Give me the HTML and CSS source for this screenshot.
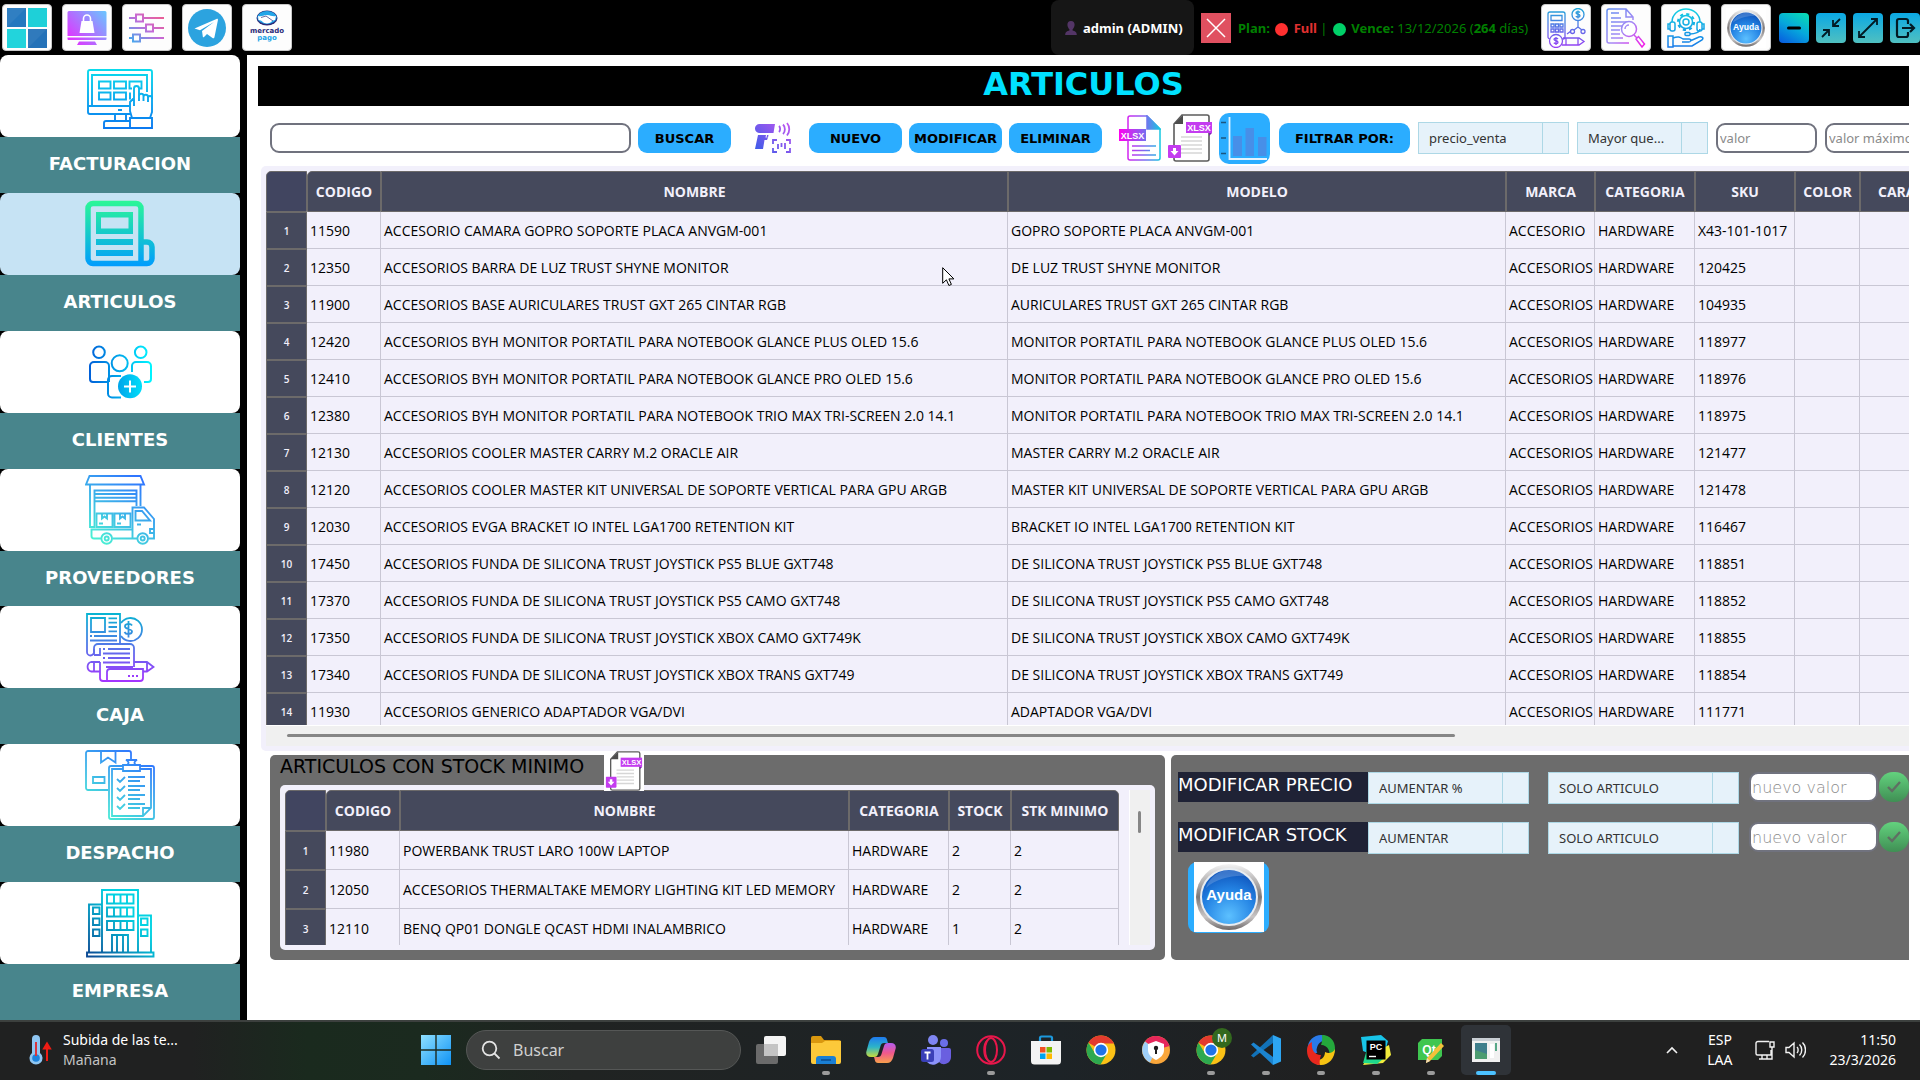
FILE: index.html
```html
<!DOCTYPE html>
<html lang="es">
<head>
  <meta charset="UTF-8" />
  <meta name="viewport" content="width=device-width, initial-scale=1.0" />
  <title>Articulos</title>
  <link rel="stylesheet" href="styles.css">
</head>
<body>
  <!-- degradados y simbolos compartidos -->
  <svg class="defs" aria-hidden="true">
    <defs>
      <linearGradient id="g-cyan" gradientUnits="userSpaceOnUse" x1="0" y1="8" x2="0" y2="68"><stop offset="0" stop-color="#0bdcec"/><stop offset="1" stop-color="#0b78f0"/></linearGradient>
      <linearGradient id="g-green" gradientUnits="userSpaceOnUse" x1="0" y1="2" x2="0" y2="68"><stop offset="0" stop-color="#2bf797"/><stop offset="1" stop-color="#009bff"/></linearGradient>
      <linearGradient id="g-people" gradientUnits="userSpaceOnUse" x1="4" y1="0" x2="66" y2="0"><stop offset="0" stop-color="#005fd8"/><stop offset="1" stop-color="#00f4ff"/></linearGradient>
      <linearGradient id="g-truck" gradientUnits="userSpaceOnUse" x1="10" y1="68" x2="52" y2="2"><stop offset="0" stop-color="#4bf5d2"/><stop offset="1" stop-color="#2f74ff"/></linearGradient>
      <linearGradient id="g-caja" gradientUnits="userSpaceOnUse" x1="0" y1="1" x2="0" y2="68"><stop offset="0" stop-color="#06b6d2"/><stop offset="1" stop-color="#a335ff"/></linearGradient>
      <linearGradient id="g-build" gradientUnits="userSpaceOnUse" x1="4" y1="68" x2="46" y2="26"><stop offset="0" stop-color="#0c4a94"/><stop offset="1" stop-color="#02d2e2"/></linearGradient>
      <linearGradient id="g-pink" gradientUnits="userSpaceOnUse" x1="0" y1="34" x2="38" y2="0"><stop offset="0" stop-color="#ee22ff"/><stop offset="1" stop-color="#6cc4ff"/></linearGradient>
      <linearGradient id="g-slider" gradientUnits="userSpaceOnUse" x1="0" y1="30" x2="26" y2="0"><stop offset="0" stop-color="#36b0f0"/><stop offset=".6" stop-color="#c46ad8"/><stop offset="1" stop-color="#e8609a"/></linearGradient>
      <linearGradient id="g-calc" gradientUnits="userSpaceOnUse" x1="0" y1="0" x2="0" y2="40"><stop offset="0" stop-color="#1ca7d8"/><stop offset="1" stop-color="#9a3cf5"/></linearGradient>
      <linearGradient id="g-report" gradientUnits="userSpaceOnUse" x1="0" y1="0" x2="36" y2="38"><stop offset="0" stop-color="#5a8cf0"/><stop offset=".55" stop-color="#a58af5"/><stop offset="1" stop-color="#f020e8"/></linearGradient>
      <linearGradient id="g-support" gradientUnits="userSpaceOnUse" x1="0" y1="0" x2="0" y2="40"><stop offset="0" stop-color="#12d3e2"/><stop offset="1" stop-color="#1878e8"/></linearGradient>
      <linearGradient id="g-scan" gradientUnits="userSpaceOnUse" x1="4" y1="32" x2="34" y2="0"><stop offset="0" stop-color="#3a5ce8"/><stop offset="1" stop-color="#c356f2"/></linearGradient>
      <linearGradient id="g-xlsx" gradientUnits="userSpaceOnUse" x1="0" y1="20" x2="42" y2="20"><stop offset="0" stop-color="#ff00f0"/><stop offset=".6" stop-color="#8068f0"/><stop offset="1" stop-color="#10cbe0"/></linearGradient>
      <linearGradient id="g-ring" x1="0" y1="0" x2="0" y2="1"><stop offset="0" stop-color="#f4f4f4"/><stop offset=".5" stop-color="#7d7878"/><stop offset=".8" stop-color="#c9c6c6"/><stop offset="1" stop-color="#6d6868"/></linearGradient>
      <radialGradient id="g-ball" cx=".5" cy=".85" r=".8"><stop offset="0" stop-color="#5cc0ff"/><stop offset=".6" stop-color="#2484e4"/><stop offset="1" stop-color="#1159c0"/></radialGradient>
      <linearGradient id="g-win" x1="0" y1="0" x2="1" y2="1"><stop offset="0" stop-color="#8fe0ff"/><stop offset="1" stop-color="#0f93f5"/></linearGradient>
      <linearGradient id="g-cop1" x1="0" y1="0" x2="0" y2="1"><stop offset="0" stop-color="#1f7bf0"/><stop offset=".5" stop-color="#2cb4c8"/><stop offset="1" stop-color="#c8dc3c"/></linearGradient>
      <linearGradient id="g-cop2" x1="0" y1="0" x2="0" y2="1"><stop offset="0" stop-color="#b45cf0"/><stop offset=".5" stop-color="#f0588c"/><stop offset="1" stop-color="#f8a04c"/></linearGradient>
    </defs>
    <symbol id="ayuda" viewBox="0 0 70 70">
      <rect width="70" height="70" fill="#fff"/>
      <circle cx="35" cy="35" r="33" fill="url(#g-ring)"/>
      <circle cx="35" cy="35" r="29" fill="#e8edf2"/>
      <circle cx="35" cy="35" r="27" fill="url(#g-ball)"/>
      <path d="M12 26a25 25 0 0 1 40-12c-14-1-30 3-40 12z" fill="#fff" opacity=".18"/>
    </symbol>
    <symbol id="xlsx-down" viewBox="0 0 44 48">
      <rect width="44" height="48" fill="#fff"/>
      <path d="M14 1h25a2 2 0 0 1 2 2v42a2 2 0 0 1-2 2H8a2 2 0 0 1-2-2V10z" fill="#fff" stroke="#5c5c5c" stroke-width="1.6"/>
      <path d="M15 1v9H6z" fill="#4d4d4d"/>
      <path d="M13 23h21M13 27h21M13 31h21M13 35h21M13 39h21" stroke="#d6d6d6" stroke-width="1.6"/>
      <path d="M41 19h3l-3 3z" fill="#8022b0"/>
      <rect x="18" y="8" width="26" height="11" fill="#c43cf0"/>
      <rect x="0" y="31" width="13" height="13" rx="1" fill="#c43cf0"/>
      <path d="M5 34h3v3h2.500L6.500 41.500 2.500 37H5z" fill="#fff"/>
    </symbol>
    <symbol id="chrome" viewBox="0 0 30 30">
      <circle cx="15" cy="15" r="14.500" fill="#fbc116"/>
      <path d="M15 15 2.440 7.750A14.500 14.500 0 0 1 27.560 7.750L28 8.500H15z" fill="#e33b2e"/>
      <path d="M2.440 7.750A14.500 14.500 0 0 0 14.500 29.500L21 18.500 9.500 19z" fill="#2da94f"/>
      <circle cx="15" cy="15" r="7.200" fill="#fff"/>
      <circle cx="15" cy="15" r="5.600" fill="#1f73e8"/>
    </symbol>
  </svg>

  <header class="topbar">
    <nav class="top-group">
      <button class="top-btn" aria-label="Inicio">
        <svg width="40" height="40" viewBox="0 0 40 40"><path d="M0 0h19v19H0z" fill="#2478bf"/><path d="M21 0h19v19H21z" fill="#1ed0d8"/><path d="M0 21h19v19H0z" fill="#22d4dc"/><path d="M21 21h19v19H21z" fill="#2472b8"/><path d="M0 0h19L0 19zM21 21h19L21 40z" fill="#fff" opacity=".06"/></svg>
      </button>
      <button class="top-btn" aria-label="Tienda">
        <svg width="40" height="34" viewBox="0 0 40 34"><path d="M2 0h36a1.500 1.500 0 0 1 1.500 1.500V25H.5V1.500A1.500 1.500 0 0 1 2 0zM.5 26.500h39V28a1 1 0 0 1-1 1h-37a1 1 0 0 1-1-1zM12 30.500h16l2 3.500H10z" fill="url(#g-pink)"/><path d="M14.500 10h11l2 12h-15z" fill="#fff"/><path d="M16.500 13V7.500a3.500 3.500 0 0 1 7 0V13" fill="none" stroke="#fff" stroke-width="1.600"/></svg>
      </button>
      <button class="top-btn" aria-label="Configuracion">
        <svg width="36" height="30" viewBox="0 0 36 30" fill="none" stroke="url(#g-slider)" stroke-width="2"><path d="M0 5h7M14 5h21M0 15h17M24 15h11M0 25h4M11 25h24"/><path d="M7 1.500h7v7H7zM17 11.500h7v7h-7zM4 21.500h7v7H4z"/></svg>
      </button>
      <button class="top-btn" aria-label="Telegram">
        <svg width="38" height="38" viewBox="0 0 38 38"><circle cx="19" cy="19" r="19" fill="#2ca3df"/><path d="M6.500 19.500 28.500 10c1-.4 1.600 0 1.400 1.200L26.500 28c-.3 1.300-1 1.500-2 1l-5.500-4-3 3c-.6.5-1.200.3-1.200-.6L14 22l12-9-14 8.200-5.500-1.700z" fill="#fff"/></svg>
      </button>
      <button class="top-btn" aria-label="Mercado Pago">
        <svg width="44" height="36" viewBox="0 0 44 36"><ellipse cx="22" cy="8" rx="10.500" ry="7.500" fill="#2a2a78"/><ellipse cx="22" cy="7.500" rx="9.700" ry="6.500" fill="#22a5e8"/><path d="M13 6c4 1 5-1 9-1s5 2 9 1l-1 4c-3 0-4 3.500-8 3.500S17 10 13.500 10z" fill="#fff"/><path d="M16 7.500 21 6l7 5" fill="none" stroke="#2a2a78" stroke-width=".7"/><text x="22" y="23" text-anchor="middle" class="mp-dark">mercado</text><text x="22" y="30" text-anchor="middle" class="mp-light">pago</text></svg>
      </button>
    </nav>

    <div class="user">
      <svg width="14" height="14" viewBox="0 0 14 14" fill="#533566"><path d="M7 0c2.500 0 3.600 1.700 3.600 3.800S9.200 7.800 8.600 8.300v1.200c2 .6 4.200 1.200 4.200 4.500H1.200c0-3.300 2.200-3.900 4.200-4.500V8.300C4.800 7.800 3.400 5.900 3.400 3.800S4.500 0 7 0z"/></svg>
      <span>admin (ADMIN)</span>
    </div>
    <button class="close-x" aria-label="Cerrar sesion"><svg width="20" height="20" viewBox="0 0 20 20"><path d="M1 1l18 18M19 1 1 19" stroke="#fff" stroke-width="1.500"/></svg></button>
    <div class="plan"><b>Plan:</b> <i class="dot red"></i> <b class="full">Full</b> | <i class="dot green"></i> <b>Vence:</b> 13/12/2026 (<b>264</b> días)</div>

    <nav class="top-group right">
      <button class="top-btn" aria-label="Calculadora">
        <svg width="40" height="40" viewBox="0 0 40 40" fill="none" stroke="url(#g-calc)" stroke-width="1.300"><rect x="2" y="4" width="17" height="27" rx="2"/><path d="M5 7.500h11v5H5z"/><path d="M5 16h3v3H5zM9.500 16h3v3h-3zM14 16h3v3h-3zM5 21h3v3H5zM9.500 21h3v3h-3zM14 21h3v3h-3z"/><circle cx="32" cy="6.500" r="6"/><path d="M34 4.500c-1-1.200-4-1-4 .5s4 1 4 2.700-3 1.800-4.200.5M32 2.500v8M32 12.500V19l-4 3M32 19l4 3M21 26l4-3"/><circle cx="26.500" cy="23.500" r="2"/><circle cx="37" cy="23.500" r="2"/><circle cx="10" cy="33" r="6.500" fill="#fff"/><path d="M12 31c-1-1.200-4-1-4 .5s4 1 4 2.700-3 1.800-4.200.5M10 29v8M17 30h16l5 3.500-5 3.500H16M20 30v7M32 30v7"/></svg>
      </button>
      <button class="top-btn" aria-label="Reportes">
        <svg width="40" height="40" viewBox="0 0 40 40" fill="none" stroke="url(#g-report)" stroke-width="1.500"><path d="M27 12V9l-7-8H3a2 2 0 0 0-2 2v30a2 2 0 0 0 2 2h20M20 1v8h7M5 5h8M5 10h10M5 14h17M5 18h11M5 22h9M5 26h9M5 30h12"/><circle cx="23" cy="21" r="7.500" fill="#fff"/><path d="M19 21a4 4 0 0 1 4-4M28 27l3 3M30 31l2.500-2.500 6 7.500-2.500 3z"/></svg>
      </button>
      <button class="top-btn" aria-label="Soporte">
        <svg width="38" height="40" viewBox="0 0 38 40" fill="none" stroke="url(#g-support)" stroke-width="1.500"><path d="M5 14a14 13 0 0 1 28 0M33 21c0 3-5 5-10 5"/><rect x="3" y="14" width="5" height="9" rx="2"/><rect x="30" y="14" width="5" height="9" rx="2"/><path d="M3 16H1v5h2M35 16h2v5h-2"/><circle cx="19" cy="14" r="3"/><circle cx="19" cy="14" r="6.500"/><circle cx="19" cy="14" r="8" stroke-dasharray="3.100 3.183" stroke-width="2.200"/><rect x="18" y="24.500" width="5" height="3" rx="1"/><path d="M1 28h5v11H1zM6 30c5-2 7-1 10 1h6c3 0 2 3 0 3h-7M23 33l9-4c3-1 5 1 3 3l-10 6H6"/></svg>
      </button>
      <button class="top-btn" aria-label="Ayuda"><svg width="40" height="40" viewBox="0 0 70 70"><use href="#ayuda"/><text x="35" y="38" text-anchor="middle" class="ayuda-text">Ayuda</text></svg></button>
    </nav>

    <div class="win-btns">
      <button class="win-btn min" aria-label="Minimizar"><svg width="16" height="16" viewBox="0 0 16 16"><rect x="1" y="6.500" width="14" height="3" rx="1.500" fill="#000"/></svg></button>
      <button class="win-btn" aria-label="Reducir"><svg width="22" height="22" viewBox="0 0 22 22" fill="none" stroke="#021a24" stroke-width="1.800"><path d="M20 2l-7 7M13 3v6h6M2 20l7-7M3 13h6v6"/></svg></button>
      <button class="win-btn" aria-label="Maximizar"><svg width="22" height="22" viewBox="0 0 22 22" fill="none" stroke="#021a24" stroke-width="1.800"><path d="M2 20 20 2M14 2h6v6M2 14v6h6"/></svg></button>
      <button class="win-btn" aria-label="Salir"><svg width="22" height="22" viewBox="0 0 22 22" fill="none" stroke="#021a24" stroke-width="2.200"><path d="M14 7V4a2 2 0 0 0-2-2H5a2 2 0 0 0-2 2v14a2 2 0 0 0 2 2h7a2 2 0 0 0 2-2v-3M8 11h12M16 7l4 4-4 4"/></svg></button>
    </div>
  </header>

  <div class="layout">
    <aside class="sidebar">
      <button class="side-item">
        <span class="side-icon"><svg width="70" height="70" viewBox="0 0 70 70" fill="none" stroke="url(#g-cyan)" stroke-width="1.900"><path d="M45 53H5a2 2 0 0 1-2-2V11a2 2 0 0 1 2-2h60a2 2 0 0 1 2 2v27"/><path d="M44 45H7V14h55v17M3 45h4"/><path d="M14 20.500h11.500v7H14zM29 20.500h12v7H29zM47 27.500h-2.500v-7h12v7H54M14 31.500h11.500v7H14zM29 31.500h12v7H29zM45 31.500v7M33 49h4M30 54v5.500M41 54v5.500M45 60H21a2 2 0 0 0-2 2v5h26"/><path d="M45 57h22v10H45zM47 57l-2-7V41l4-4v-9.500a2.500 2.500 0 0 1 5 0V40v-5a2.200 2.200 0 0 1 4.500 0v5-4a2.200 2.200 0 0 1 4.500 0v5-4a2 2 0 0 1 4 0v14l-2 6M49 37v8"/></svg></span>
        <span class="side-label">FACTURACION</span>
      </button>
      <button class="side-item active">
        <span class="side-icon"><svg width="70" height="70" viewBox="0 0 70 70"><path d="M8 4.500h43a5 5 0 0 1 5 5v55H8a5 5 0 0 1-5-5v-50a5 5 0 0 1 5-5zM56 64.500h6a5 5 0 0 0 5-5V48a5 5 0 0 0-5-5h-6" fill="none" stroke="url(#g-green)" stroke-width="5.500"/><path fill-rule="evenodd" d="M11 13h37v22H11zM16 18.500v11h27.500v-11zM11 40h37v6H11zM11 51h37v6H11z" fill="url(#g-green)"/></svg></span>
        <span class="side-label">ARTICULOS</span>
      </button>
      <button class="side-item">
        <span class="side-icon"><svg width="70" height="70" viewBox="0 0 70 70" fill="none" stroke="url(#g-people)" stroke-width="2"><circle cx="14" cy="15.300" r="5.800"/><circle cx="34.700" cy="26.300" r="8"/><circle cx="55.700" cy="15.300" r="5.800"/><path d="M22.500 45H8a3 3 0 0 1-3-3V29a4 4 0 0 1 4-4h11a4 4 0 0 1 4 4v9M47 35v-6a4 4 0 0 1 4-4h11a4 4 0 0 1 4 4v13a3 3 0 0 1-3 3h-4M36 60.500h-9a4 4 0 0 1-4-4V43a4 4 0 0 1 4-4h9M24 29v16"/><circle cx="45" cy="49.300" r="12" fill="url(#g-people)" stroke="none"/><path d="M45 43.500v12M39 49.500h12" stroke="#fff"/></svg></span>
        <span class="side-label">CLIENTES</span>
      </button>
      <button class="side-item">
        <span class="side-icon"><svg width="70" height="70" viewBox="0 0 70 70" fill="none" stroke="url(#g-truck)" stroke-width="1.900"><path d="M4.500 1h51L59 9.500H1zM5 10v42h4.500V15.500h42V31M55.500 10v21M9 19h42M9 22.700h42M9 26.300h42M51.500 15v15"/><path d="M11.500 38.500h16v13.500h-16zM29.500 38.500h16v13.500h-16zM17 38.500v5l2.500-2 2.500 2v-5M35 38.500v5l2.500-2 2.500 2v-5M14 48.500h4M32 48.500h4"/><path d="M16 63.500H9a2.500 2.500 0 0 1-2.500-2.500v-6.500H47.500M27.500 63.500H52M63.500 63.500H69V44l-10-11.500H47.500v31M50.500 36h6.500l8 9.500H50.500zM52 49.500h4M69 54h-4v4h4"/><circle cx="21.700" cy="63.500" r="5.300"/><circle cx="21.700" cy="63.500" r="2"/><circle cx="57.700" cy="63.500" r="5.300"/><circle cx="57.700" cy="63.500" r="2"/></svg></span>
        <span class="side-label">PROVEEDORES</span>
      </button>
      <button class="side-item">
        <span class="side-icon"><svg width="70" height="70" viewBox="0 0 70 70" fill="none" stroke="url(#g-caja)" stroke-width="1.800"><path d="M35 32V2H2v38a3.500 3.500 0 0 0 7 0v-3M6 6h14v14H6zM23.500 6.300H32M23.500 10.700H32M23.500 15H32M23.500 19.300H32M9 24h23M5 24h2M5 28.500h27"/><path d="M36 11a11.500 11.500 0 1 1 0 13M47 13.500c-1.500-2.500-7-2-7 1s7 2 7 5-6 3.500-7.500.5M43.500 9v16.500M43.500 9"/><path d="M9 43V36a4 4 0 0 1 4-4h32a4 4 0 0 1 4 4v19M9 43h6V36M18 37h2M23 37h22M18 41.500h27M18 46h2M23 46h22M18 50.500h27"/><path d="M15 50H6a5 5 0 0 0 0 9.500h9M9 50v9.500M49 50h13l6.500 5-6.500 4.500h-4M62 50v9.500M15 50v16a3 3 0 0 0 3 3h37a3 3 0 0 0 3-3V57H25a3 3 0 0 0-3 3v9M21 55h27M43 64h2M47 64h2M51 64h2"/></svg></span>
        <span class="side-label">CAJA</span>
      </button>
      <button class="side-item">
        <span class="side-icon"><svg width="70" height="70" viewBox="0 0 70 70" fill="none" stroke="url(#g-truck)" stroke-width="1.800"><path d="M23 40H3a2 2 0 0 1-2-2V3a2 2 0 0 1 2-2h41a2 2 0 0 1 2 2v8M16 1v11.500l7-5 7.500 5V1M8 27h11.500v6H8z"/><path d="M38 16H26a2 2 0 0 0-2 2v49a2 2 0 0 0 2 2h41a2 2 0 0 0 2-2V18a2 2 0 0 0-2-2H55M38 19H27v47h31l8-8V19H55M58 66v-8h8M38 15h17v6H38zM42 15c3-2 1-4-1-5h11c-2 1-4 3-1 5"/><path d="M32 29l3 3 5-5M32 38l3 3 5-5M32 47l3 3 5-5M32 56l3 3 5-5M43 27h17M43 31h12M43 36h17M43 40h12M43 45h17M43 49h12M43 54h17M43 58h12"/></svg></span>
        <span class="side-label">DESPACHO</span>
      </button>
      <button class="side-item">
        <span class="side-icon"><svg width="70" height="70" viewBox="0 0 70 70" fill="none" stroke="url(#g-build)" stroke-width="1.900"><path d="M17 64V2h36v62M4 64V16.500h13M53 27.500h13V64M2 64.500h66.500v4H2z"/><path d="M22 6.500h26.500v9H22zM22 19.500h26.500v9H22zM22 33h26.500v9H22zM29 6.500v9M35.500 6.500v9M42 6.500v9M29 19.500v9M35.500 19.500v9M42 19.500v9M29 33v9M35.500 33v9M42 33v9M8 19.500h6.500v6.500H8zM8 30.500h6.500V37H8zM8 41.500h6.500V48H8zM56 30.500h6.500V37H56zM56 41.500h6.500V48H56zM27 64V47h16v17M32 47v17M38 47v17"/></svg></span>
        <span class="side-label">EMPRESA</span>
      </button>
    </aside>

    <main class="content">
      <h1>ARTICULOS</h1>

      <div class="toolbar">
        <input type="text" class="field search" aria-label="Buscar articulo">
        <button class="btn">BUSCAR</button>
        <button class="icon-btn scan" aria-label="Escanear">
          <svg width="36" height="32" viewBox="0 0 36 32" fill="url(#g-scan)"><path d="M4 2h16l-1.500 9H5a4.500 4.500 0 0 1-1-9zM3 13h8l-.5 2.500H13L12 18H9.500L8 27H0z"/><path d="M12 13h1.500l-.5 2.500h-1.500z"/><path d="M24 4c1.500 1.500 1.500 4.500 0 6M28 2.500c2.500 2.500 2.500 7 0 9.500M32 1c3 3.500 3 9 0 12.500M18 22v-4h4M31 18h4v4M18 26v4h4M31 30h4v-4M23 22v5M26.500 21v4M30 21v6" fill="none" stroke="url(#g-scan)" stroke-width="1.800"/></svg>
        </button>
        <button class="btn">NUEVO</button>
        <button class="btn">MODIFICAR</button>
        <button class="btn">ELIMINAR</button>
        <button class="icon-btn export" aria-label="Exportar XLSX">
          <svg width="42" height="46" viewBox="0 0 42 46"><path d="M28 1H11a2 2 0 0 0-2 2v40a2 2 0 0 0 2 2h28a2 2 0 0 0 2-2V14z" fill="#fff" stroke="url(#g-xlsx)" stroke-width="1.500"/><path d="M28 1v13h13zM13 31h24M13 35.500h18M13 40h24" fill="url(#g-xlsx)" stroke="url(#g-xlsx)" stroke-width="1.500"/><rect y="14" width="27" height="12" fill="url(#g-xlsx)"/><text x="13.500" y="23.500" text-anchor="middle" class="xlsx-text">XLSX</text></svg>
        </button>
        <button class="icon-btn" aria-label="Descargar XLSX"><svg width="44" height="48" viewBox="0 0 44 48"><use href="#xlsx-down"/><text x="31" y="17" text-anchor="middle" class="xlsx-text">XLSX</text></svg></button>
        <button class="chart-btn" aria-label="Grafico">
          <svg width="51" height="51" viewBox="0 0 51 51"><path d="M14 23h9v20h-9zM26.500 15H35v28h-8.500zM39 24h8.500v19H39z" fill="#478fe8"/><path d="M10.500 4v42H48" fill="none" stroke="#e4f3ff" stroke-width="1.800"/><path d="M2 9.500h5M2 25h5M2 40.500h5" stroke="#1b5680" stroke-width="1.600"/></svg>
        </button>
        <div class="filters">
          <button class="btn wide">FILTRAR POR:</button>
          <select class="combo c-campo" aria-label="Campo"><option>precio_venta</option></select>
          <select class="combo c-cond" aria-label="Condicion"><option>Mayor que...</option></select>
          <input type="text" class="field valor" placeholder="valor" aria-label="valor">
          <input type="text" class="field valor" placeholder="valor máximo" aria-label="valor máximo">
        </div>
      </div>

      <section class="grid-box">
        <div class="grid-view">
          <table class="grid articulos">
            <colgroup><col class="w-num"><col class="w-cod"><col class="w-nom"><col class="w-mod"><col class="w-mar"><col class="w-cat"><col class="w-sku"><col class="w-col"><col class="w-car"></colgroup>
            <thead><tr><th></th><th>CODIGO</th><th>NOMBRE</th><th>MODELO</th><th>MARCA</th><th>CATEGORIA</th><th>SKU</th><th>COLOR</th><th>CARACTERISTICAS</th></tr></thead>
            <tbody>
              <tr><th>1</th><td>11590</td><td>ACCESORIO CAMARA GOPRO SOPORTE PLACA ANVGM-001</td><td>GOPRO SOPORTE PLACA ANVGM-001</td><td>ACCESORIO</td><td>HARDWARE</td><td>X43-101-1017</td><td></td><td></td></tr>
              <tr><th>2</th><td>12350</td><td>ACCESORIOS BARRA DE LUZ TRUST SHYNE MONITOR</td><td>DE LUZ TRUST SHYNE MONITOR</td><td>ACCESORIOS</td><td>HARDWARE</td><td>120425</td><td></td><td></td></tr>
              <tr><th>3</th><td>11900</td><td>ACCESORIOS BASE AURICULARES TRUST GXT 265 CINTAR RGB</td><td>AURICULARES TRUST GXT 265 CINTAR RGB</td><td>ACCESORIOS</td><td>HARDWARE</td><td>104935</td><td></td><td></td></tr>
              <tr><th>4</th><td>12420</td><td>ACCESORIOS BYH MONITOR PORTATIL PARA NOTEBOOK GLANCE PLUS OLED 15.6</td><td>MONITOR PORTATIL PARA NOTEBOOK GLANCE PLUS OLED 15.6</td><td>ACCESORIOS</td><td>HARDWARE</td><td>118977</td><td></td><td></td></tr>
              <tr><th>5</th><td>12410</td><td>ACCESORIOS BYH MONITOR PORTATIL PARA NOTEBOOK GLANCE PRO OLED 15.6</td><td>MONITOR PORTATIL PARA NOTEBOOK GLANCE PRO OLED 15.6</td><td>ACCESORIOS</td><td>HARDWARE</td><td>118976</td><td></td><td></td></tr>
              <tr><th>6</th><td>12380</td><td>ACCESORIOS BYH MONITOR PORTATIL PARA NOTEBOOK TRIO MAX TRI-SCREEN 2.0 14.1</td><td>MONITOR PORTATIL PARA NOTEBOOK TRIO MAX TRI-SCREEN 2.0 14.1</td><td>ACCESORIOS</td><td>HARDWARE</td><td>118975</td><td></td><td></td></tr>
              <tr><th>7</th><td>12130</td><td>ACCESORIOS COOLER MASTER CARRY M.2 ORACLE AIR</td><td>MASTER CARRY M.2 ORACLE AIR</td><td>ACCESORIOS</td><td>HARDWARE</td><td>121477</td><td></td><td></td></tr>
              <tr><th>8</th><td>12120</td><td>ACCESORIOS COOLER MASTER KIT UNIVERSAL DE SOPORTE VERTICAL PARA GPU ARGB</td><td>MASTER KIT UNIVERSAL DE SOPORTE VERTICAL PARA GPU ARGB</td><td>ACCESORIOS</td><td>HARDWARE</td><td>121478</td><td></td><td></td></tr>
              <tr><th>9</th><td>12030</td><td>ACCESORIOS EVGA BRACKET IO INTEL LGA1700 RETENTION KIT</td><td>BRACKET IO INTEL LGA1700 RETENTION KIT</td><td>ACCESORIOS</td><td>HARDWARE</td><td>116467</td><td></td><td></td></tr>
              <tr><th>10</th><td>17450</td><td>ACCESORIOS FUNDA DE SILICONA TRUST JOYSTICK PS5 BLUE GXT748</td><td>DE SILICONA TRUST JOYSTICK PS5 BLUE GXT748</td><td>ACCESORIOS</td><td>HARDWARE</td><td>118851</td><td></td><td></td></tr>
              <tr><th>11</th><td>17370</td><td>ACCESORIOS FUNDA DE SILICONA TRUST JOYSTICK PS5 CAMO GXT748</td><td>DE SILICONA TRUST JOYSTICK PS5 CAMO GXT748</td><td>ACCESORIOS</td><td>HARDWARE</td><td>118852</td><td></td><td></td></tr>
              <tr><th>12</th><td>17350</td><td>ACCESORIOS FUNDA DE SILICONA TRUST JOYSTICK XBOX CAMO GXT749K</td><td>DE SILICONA TRUST JOYSTICK XBOX CAMO GXT749K</td><td>ACCESORIOS</td><td>HARDWARE</td><td>118855</td><td></td><td></td></tr>
              <tr><th>13</th><td>17340</td><td>ACCESORIOS FUNDA DE SILICONA TRUST JOYSTICK XBOX TRANS GXT749</td><td>DE SILICONA TRUST JOYSTICK XBOX TRANS GXT749</td><td>ACCESORIOS</td><td>HARDWARE</td><td>118854</td><td></td><td></td></tr>
              <tr><th>14</th><td>11930</td><td>ACCESORIOS GENERICO ADAPTADOR VGA/DVI</td><td>ADAPTADOR VGA/DVI</td><td>ACCESORIOS</td><td>HARDWARE</td><td>111771</td><td></td><td></td></tr>
            </tbody>
          </table>
        </div>
        <div class="scroll-h"><div class="thumb"></div></div>
      </section>

      <div class="bottom">
        <section class="panel stock">
          <div class="stock-head">
            <h2>ARTICULOS CON STOCK MINIMO</h2>
            <button class="icon-btn stock-export" aria-label="Descargar stock minimo"><svg width="40" height="40" viewBox="0 0 44 48"><use href="#xlsx-down"/><text x="31" y="17" text-anchor="middle" class="xlsx-text">XLSX</text></svg></button>
          </div>
          <div class="stock-box">
            <div class="grid-view">
              <table class="grid minimo">
                <colgroup><col class="w-num"><col class="w-cod"><col class="w-nom2"><col class="w-cat"><col class="w-stk"><col class="w-min"></colgroup>
                <thead><tr><th></th><th>CODIGO</th><th>NOMBRE</th><th>CATEGORIA</th><th>STOCK</th><th>STK MINIMO</th></tr></thead>
                <tbody>
                  <tr><th>1</th><td>11980</td><td>POWERBANK TRUST LARO 100W LAPTOP</td><td>HARDWARE</td><td>2</td><td>2</td></tr>
                  <tr><th>2</th><td>12050</td><td>ACCESORIOS THERMALTAKE MEMORY LIGHTING KIT LED MEMORY</td><td>HARDWARE</td><td>2</td><td>2</td></tr>
                  <tr><th>3</th><td>12110</td><td>BENQ QP01 DONGLE QCAST HDMI INALAMBRICO</td><td>HARDWARE</td><td>1</td><td>2</td></tr>
                </tbody>
              </table>
            </div>
            <div class="scroll-v"><div class="thumb"></div></div>
          </div>
        </section>

        <section class="panel modificar">
          <div class="mod-row">
            <label for="precio">MODIFICAR PRECIO</label>
            <select class="combo c-accion" aria-label="Accion precio"><option>AUMENTAR %</option></select>
            <select class="combo c-alcance" aria-label="Alcance precio"><option>SOLO ARTICULO</option></select>
            <input type="text" id="precio" class="nuevo" placeholder="nuevo valor">
            <button class="ok" aria-label="Aplicar precio"><svg width="16" height="14" viewBox="0 0 16 14"><path d="M2 7l4 4 8-9" fill="none" stroke="#5f6f63" stroke-width="2.400"/></svg></button>
          </div>
          <div class="mod-row">
            <label for="stock">MODIFICAR STOCK</label>
            <select class="combo c-accion" aria-label="Accion stock"><option>AUMENTAR</option></select>
            <select class="combo c-alcance" aria-label="Alcance stock"><option>SOLO ARTICULO</option></select>
            <input type="text" id="stock" class="nuevo" placeholder="nuevo valor">
            <button class="ok" aria-label="Aplicar stock"><svg width="16" height="14" viewBox="0 0 16 14"><path d="M2 7l4 4 8-9" fill="none" stroke="#5f6f63" stroke-width="2.400"/></svg></button>
          </div>
          <button class="ayuda-btn" aria-label="Ayuda"><svg width="70" height="70" viewBox="0 0 70 70"><use href="#ayuda"/><text x="35" y="38" text-anchor="middle" class="ayuda-text">Ayuda</text></svg></button>
        </section>
      </div>
    </main>
  </div>

  <footer class="taskbar">
    <div class="weather">
      <svg width="24" height="32" viewBox="0 0 24 32"><path d="M4 5a4 4 0 0 1 8 0v14a6.500 6.500 0 1 1-8 0z" fill="#8fc6f2"/><circle cx="8" cy="24" r="3.800" fill="#1c82dc"/><path d="M8 8v14" stroke="#d8343c" stroke-width="2"/><path d="M19 27V12M16 14.500l3-5 3 5z" stroke="#f01c14" fill="#f01c14" stroke-width="2"/></svg>
      <div><div class="w-title">Subida de las te...</div><div class="w-sub">Mañana</div></div>
    </div>
    <div class="tasks">
      <button class="task" aria-label="Inicio"><svg width="30" height="30" viewBox="0 0 30 30" fill="url(#g-win)"><path d="M0 0h14.300v14.300H0zM15.700 0H30v14.300H15.700zM0 15.700h14.300V30H0zM15.700 15.700H30V30H15.700z"/></svg></button>
      <div class="task-search">
        <svg width="20" height="20" viewBox="0 0 20 20" fill="none" stroke="#e4e4e4" stroke-width="1.800"><circle cx="8.500" cy="8.500" r="6.800"/><path d="M13.500 13.500 18.500 18.500"/></svg>
        <input type="text" placeholder="Buscar" aria-label="Buscar">
      </div>
      <button class="task" aria-label="Vista de tareas"><svg width="30" height="28" viewBox="0 0 30 28"><rect x="0" y="8" width="22" height="20" rx="2" fill="#6b6b6b"/><rect x="8" y="0" width="22" height="20" rx="2" fill="#f4f4f4"/><path d="M8 8h14v12H8z" fill="#c4c4c4"/></svg></button>
      <button class="task run" aria-label="Explorador"><svg width="30" height="28" viewBox="0 0 30 28"><path d="M0 2a2 2 0 0 1 2-2h8l3 4h15a2 2 0 0 1 2 2v4H0z" fill="#d9980f"/><path d="M0 7h11l3-2h16v21a2 2 0 0 1-2 2H2a2 2 0 0 1-2-2z" fill="#fcc93a"/><path d="M5 28v-5a3 3 0 0 1 3-3h14a3 3 0 0 1 3 3v5z" fill="#1a7fd4"/><path d="M10 24h10" stroke="#0c4f94" stroke-width="1.600"/></svg></button>
      <button class="task" aria-label="Copilot"><svg width="30" height="26" viewBox="0 0 30 26"><path d="M9 0h9c3 0 3 3 4 6h-4c-2 0-3 1-3.500 3L12 17c-.6 2-1.500 3-4 3H5c-4 0-5.500-3-4.500-6l2.500-9C4 2 6 0 9 0z" fill="url(#g-cop1)"/><path d="M21 26h-9c-3 0-3-3-4-6h4c2 0 3-1 3.500-3L18 9c.6-2 1.500-3 4-3h3c4 0 5.500 3 4.500 6L27 21c-1 3-3 5-6 5z" fill="url(#g-cop2)"/></svg></button>
      <button class="task" aria-label="Teams"><svg width="30" height="30" viewBox="0 0 30 30"><circle cx="12" cy="5" r="5" fill="#7f86f2"/><circle cx="23" cy="8" r="4" fill="#6a6ee8"/><path d="M18 13h10a2 2 0 0 1 2 2v7a7 7 0 0 1-12 5z" fill="#6a5fe0"/><path d="M6 12h14v10a8 8 0 0 1-14 5z" fill="#8c93fa"/><rect y="14" width="13" height="13" rx="2.500" fill="#3a40b8"/><path d="M3.500 17.500h6M6.500 17.500v7" stroke="#fff" stroke-width="1.800"/></svg></button>
      <button class="task run" aria-label="Opera GX"><svg width="30" height="30" viewBox="0 0 30 30" fill="none" stroke="#e8174b" stroke-width="2"><circle cx="15" cy="15" r="13.800"/><ellipse cx="15" cy="15" rx="6" ry="12"/><path d="M11 5.500C7 9 7 21 11 24.500" stroke-width="1.500"/></svg></button>
      <button class="task" aria-label="Store"><svg width="30" height="30" viewBox="0 0 30 30"><path d="M9 7V3a1.500 1.500 0 0 1 1.500-1.500h9A1.500 1.500 0 0 1 21 3v4" fill="none" stroke="#1c98dc" stroke-width="2.200"/><path d="M0 6h30v20a3.500 3.500 0 0 1-3.500 3.500h-23A3.500 3.500 0 0 1 0 26z" fill="#f3f3f3"/><path d="M9 12h5.500v5.500H9z" fill="#f25022"/><path d="M15.500 12H21v5.500h-5.500z" fill="#7fba00"/><path d="M9 18.500h5.500V24H9z" fill="#00a4ef"/><path d="M15.500 18.500H21V24h-5.500z" fill="#ffb900"/></svg></button>
      <button class="task" aria-label="Chrome"><svg width="30" height="30"><use href="#chrome"/></svg></button>
      <button class="task" aria-label="Navegador seguro"><svg width="28" height="28" viewBox="0 0 28 28"><circle cx="14" cy="14" r="14" fill="#f9a63a"/><path d="M14 14 3 5.500A14 14 0 0 1 27.500 10z" fill="#e6275a"/><path d="M3 5.500A14 14 0 0 0 8 26.500L14 14z" fill="#9fd0fa"/><path d="M14 5l8 3v6c0 5-4 8-8 10-4-2-8-5-8-10V8z" fill="#fff"/><circle cx="14" cy="12" r="2.200" fill="#1c1c1c"/><path d="M14 12v6" stroke="#1c1c1c" stroke-width="2"/></svg></button>
      <button class="task run" aria-label="Chrome M"><svg width="30" height="30"><use href="#chrome"/></svg><span class="badge">M</span></button>
      <button class="task run" aria-label="VS Code"><svg width="30" height="30" viewBox="0 0 30 30"><path d="M22 8 2.500 22.500 0 20.500 22 0z" fill="#1272b8"/><path d="M22 22 2.500 7.500 0 9.500 22 30z" fill="#1b84d0"/><path d="M22 0 30 3.500v23L22 30z" fill="#2da5f2"/></svg></button>
      <button class="task run" aria-label="Sincronizar"><svg width="28" height="30" viewBox="0 0 28 30"><path d="M1 17C-1 7 6 0 14 0c5 0 8 3 9 6-6-2-13 1-13 8 0 2 1 3 1 3-4 3-8 3-10 0z" fill="#2a7ae8"/><path d="M15 0c8 0 13 6 13 13 0 6-3 9-6 10 2-6-1-13-8-13 2-5 1-8 1-10z" fill="#24a83c"/><path d="M28 14c0 9-6 16-14 16-4 0-7-2-9-5 6 2 13-1 13-8 4 2 8 1 10-3z" fill="#f7c313"/><path d="M13 30C5 30 0 23 0 16c0-6 3-8 5-9-1 7 2 13 9 13-1 4-2 7-1 10z" fill="#e8281e"/><circle cx="14" cy="15" r="4.500" fill="#202224"/></svg></button>
      <button class="task run" aria-label="PyCharm"><svg width="30" height="30" viewBox="0 0 30 30"><path d="M0 2 20 0l7 6-5 18L2 16z" fill="#18c4e8"/><path d="M8 20 28 10l2 10-8 8-20 2z" fill="#f2ec3c"/><path d="M2 28l4-14 16 10-6 5z" fill="#1fd88c"/><rect x="5.500" y="5.500" width="19" height="19" fill="#000"/><text x="15" y="15" text-anchor="middle" class="pc-text">PC</text><path d="M8 21.500h7" stroke="#fff" stroke-width="1.400"/></svg></button>
      <button class="task run" aria-label="Qt Designer"><svg width="26" height="26" viewBox="0 0 26 26"><path d="M4 2h20v17l-4 4H0V6z" fill="#3fc650"/><text x="11" y="17" text-anchor="middle" class="qt-text">Qt</text><path d="M23 6l3 3-14 15-4 2 1-5z" fill="#f3c13a"/><path d="M9 21l3 3-4 2z" fill="#f2dcb8"/></svg></button>
      <button class="task on" aria-label="Aplicacion"><svg width="28" height="24" viewBox="0 0 28 24"><rect width="28" height="24" fill="#f1f1f1"/><rect width="28" height="3" fill="#c8ced4"/><rect x="3" y="5" width="12" height="16" fill="#3f7f8c"/><path d="M3 12l12 4v5H3z" fill="#4c9c70"/><path d="M18 6h4v14h-4z" fill="#fff"/><path d="M24 5v8" stroke="#58a888" stroke-width="2"/></svg></button>
    </div>
    <div class="tray">
      <svg width="14" height="10" viewBox="0 0 14 10"><path d="M2 8l5-5 5 5" fill="none" stroke="#f2f2f2" stroke-width="1.600"/></svg>
      <div class="lang">ESP<br>LAA</div>
      <div class="tray-icons">
        <svg width="21" height="20" viewBox="0 0 21 20" fill="none" stroke="#f2f2f2" stroke-width="1.400"><path d="M14 1.500H3a2 2 0 0 0-2 2v10a1.500 1.500 0 0 0 1.500 1.500H16v-5M4 19h11M7 15v4M12 15v4M15 2h4v5h-4zM17 7v12h-2"/></svg>
        <svg width="21" height="18" viewBox="0 0 21 18" fill="none" stroke="#f2f2f2" stroke-width="1.400"><path d="M1 6.500h3L9 2v14L4 11.500H1zM12 6c1.500 1.500 1.500 4.500 0 6M14.500 3.500c3 3 3 8 0 11M17.500 1.500c4 4 4 11 0 15"/></svg>
      </div>
      <div class="clock">11:50<br>23/3/2026</div>
    </div>
  </footer>

  <svg class="cursor" width="13" height="20" viewBox="0 0 13 20"><path d="M.7.700v15.600l3.700-3.500 2.500 5.700 2.500-1.100-2.500-5.500h5z" fill="#fff" stroke="#000" stroke-width="1"/></svg>
</body>
</html>
```

FILE: styles.css
```css
* {
  box-sizing: border-box;
}
body {
  margin: 0;
  height: 100vh;
  display: flex;
  flex-direction: column;
  overflow: hidden;
  background: #000;
  font-family: "Noto Sans", "Open Sans", sans-serif;
  font-size: 13px;
}
button {
  font-family: inherit;
  padding: 0;
  border: none;
  background: none;
  cursor: pointer;
}
svg {
  display: block;
  flex: none;
}
.defs {
  position: absolute;
  width: 0;
  height: 0;
}

/* barra superior */
.topbar {
  display: flex;
  align-items: center;
  height: 55px;
  padding-left: 2px;
  background: #000;
  white-space: nowrap;
}
.top-group {
  display: flex;
  gap: 10px;
}
.top-btn {
  display: flex;
  align-items: center;
  justify-content: center;
  width: 50px;
  height: 47px;
  background: #fdfdfd;
  border: 1px solid #c8c8c8;
  border-radius: 4px;
}
.user {
  display: flex;
  align-items: center;
  gap: 5px;
  height: 55px;
  width: 143px;
  margin-left: auto;
  padding-left: 13px;
  border-radius: 8px;
  background: #161616;
  color: #fff;
  font-weight: bold;
}
.close-x {
  display: flex;
  align-items: center;
  justify-content: center;
  width: 30px;
  height: 30px;
  margin: 0 7px;
  background: #e05060;
}
.plan {
  width: 294px;
  color: #008000;
  font-size: 13px;
}
.plan .full {
  color: #e03030;
}
.dot {
  display: inline-block;
  width: 13px;
  height: 13px;
  margin: 0 2px;
  border-radius: 50%;
  vertical-align: middle;
}
.red {
  background: #ff3030;
}
.green {
  background: #00d068;
}
.right {
  margin-left: 9px;
}
.win-btns {
  display: flex;
  gap: 7px;
  margin-left: 8px;
}
.win-btn {
  display: flex;
  align-items: center;
  justify-content: center;
  width: 30px;
  height: 30px;
  border-radius: 4px;
  background: linear-gradient(#0aa8e4, #50c0c0);
}
.win-btn.min {
  background: linear-gradient(30deg, #0858e0, #06a8dc 50%, #08e0b0);
}

/* menu lateral */
.layout {
  display: flex;
  flex: 1;
  min-height: 0;
}
.sidebar {
  display: flex;
  flex-direction: column;
  width: 240px;
  margin-right: 7px;
  flex: none;
}
.side-item {
  display: flex;
  flex-direction: column;
  flex: 1;
}
.side-icon {
  display: flex;
  align-items: center;
  justify-content: center;
  width: 100%;
  height: 82px;
  background: #fff;
  border-radius: 8px;
}
.active .side-icon {
  background: #c6e3f4;
}
.side-label {
  display: flex;
  align-items: center;
  justify-content: center;
  width: 100%;
  flex: 1;
  padding-bottom: 3px;
  background: #48858c;
  color: #fff;
  font: bold 18px "DejaVu Sans", sans-serif;
}

/* contenido */
.content {
  display: flex;
  flex-direction: column;
  flex: 1;
  min-width: 0;
  padding: 11px 11px 60px;
  background: #fff;
}
.content > * {
  flex: none;
  overflow: hidden;
}
h1 {
  height: 40px;
  margin: 0;
  background: #000;
  color: #00e1ff;
  font: bold 32px/36px "DejaVu Sans", sans-serif;
  text-align: center;
}
.toolbar {
  display: flex;
  align-items: center;
  gap: 7px;
  height: 60px;
  padding: 4px 0 0 12px;
}
.toolbar > *, .filters > * {
  flex: none;
}
.field {
  height: 30px;
  padding: 0 2px;
  border: 2px solid #70727e;
  border-radius: 9px;
  background: #fff;
  font: 13px "Noto Sans", sans-serif;
}
.field::placeholder {
  color: #8a8a8a;
}
.search {
  width: 361px;
}
.btn {
  width: 93px;
  height: 30px;
  border-radius: 9px;
  background: #2badff;
  color: #000;
  font: bold 13px "DejaVu Sans", sans-serif;
  white-space: nowrap;
}
.btn.wide {
  width: 131px;
}
.icon-btn {
  display: flex;
  align-items: center;
  justify-content: center;
}
.scan {
  width: 64px;
  padding-left: 6px;
}
.export {
  width: 52px;
  justify-content: flex-end;
}
.chart-btn {
  width: 51px;
  height: 51px;
  border-radius: 10px;
  background: #2badff;
}
.filters {
  display: flex;
  align-items: center;
  gap: 8px;
  margin-left: 2px;
}
.combo {
  appearance: none;
  height: 32px;
  padding: 0 0 0 10px;
  border: 1px solid #add8e6;
  border-radius: 0;
  /* linea que separa la flecha */
  background: linear-gradient(#add8e6, #add8e6) right 25px top 0 / 1px 100% no-repeat #e6f2fa;
  color: #333;
  font: 13px "Noto Sans", sans-serif;
}
.c-campo {
  width: 151px;
}
.c-cond {
  width: 131px;
}
.c-accion {
  width: 161px;
}
.c-alcance {
  width: 191px;
  margin: 0 10px 0 19px;
}
.valor {
  width: 101px;
}

/* tablas */
.grid-box {
  display: flex;
  flex-direction: column;
  flex: 1;
  min-height: 0;
  margin-left: 3px;
  padding: 5px 0 5px 5px;
  border-radius: 5px 0 0 5px;
  background: #f2f0fb;
}
.grid-view {
  flex: 1;
  min-height: 0;
  min-width: 0;
  overflow: hidden;
}
.grid {
  table-layout: fixed;
  border-collapse: separate;
  border-spacing: 0;
  color: #000;
  font-family: "Open Sans", "Noto Sans", sans-serif;
  font-size: 14px;
}
.articulos {
  width: 1753px;
}
.minimo {
  width: 834px;
}
.w-num { width: 41px; }
.w-cod { width: 74px; }
.w-nom { width: 627px; }
.w-mod { width: 498px; }
.w-mar { width: 89px; }
.w-cat { width: 100px; }
.w-sku { width: 100px; }
.w-col { width: 65px; }
.w-car { width: 159px; }
.w-nom2 { width: 449px; }
.w-stk { width: 62px; }
.w-min { width: 108px; }
.grid th {
  padding: 0;
  border: 1px solid #6c6a6a;
  background: #45495c;
  color: #f2f0fb;
}
.grid thead th {
  height: 41px;
}
.grid thead th:first-child {
  background: #414560;
}
.grid thead th:nth-child(-n+2) {
  border-top-left-radius: 5px;
}
.minimo thead th:last-child {
  border-top-right-radius: 5px;
}
.grid tbody th {
  font-size: 10px;
  font-weight: 600;
}
.grid td {
  height: 37px;
  padding: 0 0 0 3px;
  border-right: 1px solid #c9c7d4;
  border-bottom: 1px solid #c9c7d4;
  background: #f2f0fb;
  white-space: nowrap;
}
.minimo td {
  height: 39px;
}
.scroll-h {
  height: 21px;
  padding: 8px 0 0 21px;
  border-top: 1px solid #fff;
  background: #f0f0f0;
}
.thumb {
  border-radius: 2px;
  background: #868686;
}
.scroll-h .thumb {
  width: 72%;
  height: 3px;
}
.scroll-v {
  width: 21px;
  padding: 21px 0 0 8px;
  border-left: 1px solid #fff;
  background: #f0f0f0;
}
.scroll-v .thumb {
  width: 3px;
  height: 22px;
}

/* paneles inferiores */
.content .bottom {
  display: flex;
  gap: 6px;
  height: 205px;
  margin: 4px 0 0 12px;
  overflow: visible;
}
.panel {
  background: #6c6c6c;
  border-radius: 5px;
}
.stock {
  display: flex;
  flex-direction: column;
  flex: 0 0 895px;
  padding: 0 10px 10px;
}
.stock-head {
  display: flex;
  gap: 20px;
  height: 30px;
}
.stock-head h2 {
  margin: 0;
  color: #000;
  font: 19px/22px "DejaVu Sans", sans-serif;
}
.stock-export {
  position: relative;
  z-index: 1;
  width: 40px;
  height: 40px;
  margin-top: -4px;
  background: #fff;
}
.stock-box {
  display: flex;
  flex: 1;
  min-height: 0;
  padding: 5px;
  border-radius: 5px;
  background: #f2f0fb;
}
.modificar {
  flex: 1;
  min-width: 0;
  padding: 17px 0 0 7px;
  border-radius: 5px 0 0 5px;
  overflow: hidden;
}
.mod-row {
  display: flex;
  align-items: flex-start;
  height: 32px;
  margin-bottom: 18px;
}
.mod-row > * {
  flex: none;
}
.mod-row label {
  width: 190px;
  height: 30px;
  background: #1f2235;
  color: #fff;
  font: 18px/26px "DejaVu Sans", sans-serif;
  white-space: nowrap;
}
.nuevo {
  width: 129px;
  height: 30px;
  margin-right: 1px;
  padding: 0 1px;
  border: 2px solid #70727e;
  border-radius: 9px;
  background: #fff;
  font: 200 16px "DejaVu Sans", sans-serif;
}
.nuevo::placeholder {
  color: #8c8c8c;
}
.ok {
  display: flex;
  align-items: center;
  justify-content: center;
  width: 30px;
  height: 30px;
  border-radius: 14px;
  background: linear-gradient(#63d27e, #408f54);
}
.ayuda-btn {
  display: flex;
  justify-content: center;
  width: 81px;
  height: 71px;
  margin: -10px 0 0 10px;
  border-radius: 9px;
  background: #2badff;
}

/* barra de tareas */
.taskbar {
  display: grid;
  grid-template-columns: 411px auto 1fr;
  align-items: center;
  height: 60px;
  padding-bottom: 2px;
  border-top: 2px solid #3c403e;
  background: linear-gradient(90deg, #202121 10%, #1a2a1e 16%, #1b2a1f 22%, #202322 30%, #1d2327 55%, #202020 70%);
  color: #fff;
}
.weather {
  display: flex;
  align-items: center;
  gap: 11px;
  padding-left: 28px;
  font-size: 14px;
  line-height: 20px;
}
.w-sub {
  color: #c4c4c4;
}
.tasks {
  display: flex;
  align-items: center;
  gap: 5px;
}
.task {
  position: relative;
  display: flex;
  align-items: center;
  justify-content: center;
  width: 50px;
  height: 50px;
  border-radius: 5px;
}
.task-search {
  display: flex;
  align-items: center;
  gap: 12px;
  width: 275px;
  height: 40px;
  padding: 0 14px;
  border: 1px solid #555756;
  border-radius: 20px;
  background: #3e403f;
}
.task-search input {
  flex: 1;
  min-width: 0;
  padding: 0;
  border: none;
  background: none;
  color: #fff;
  font: 16px "Noto Sans", sans-serif;
}
.task-search input::placeholder {
  color: #d0d0d0;
}
.run::after, .on::after {
  content: "";
  position: absolute;
  bottom: 0;
  left: 21px;
  width: 8px;
  height: 4px;
  border-radius: 2px;
  background: #9b9b9b;
}
.on {
  background: #2f3338;
}
.on::after {
  left: 15px;
  width: 20px;
  background: #4cc2ff;
}
.badge {
  position: absolute;
  top: 3px;
  right: 4px;
  width: 20px;
  height: 20px;
  border-radius: 50%;
  background: #33691e;
  color: #fff;
  font-size: 11px;
  line-height: 20px;
}
.tray {
  display: flex;
  align-items: center;
  justify-content: flex-end;
  padding-right: 24px;
  font-size: 14px;
  line-height: 20px;
}
.lang {
  margin: 0 22px 0 28px;
  text-align: center;
}
.tray-icons {
  display: flex;
  align-items: center;
  gap: 9px;
}
.clock {
  margin-left: 24px;
  text-align: right;
}
.cursor {
  position: absolute;
  left: 942px;
  top: 267px;
}

/* textos dentro de los iconos */
.ayuda-text {
  font: bold 15px "Liberation Sans", sans-serif;
  fill: #fff;
}
.xlsx-text {
  font: bold 9px "Liberation Sans", sans-serif;
  fill: #fff;
}
.mp-dark, .mp-light {
  font: bold 7px "DejaVu Sans", sans-serif;
  fill: #2a2a78;
}
.mp-light {
  fill: #22a5e8;
}
.pc-text {
  font: bold 9px "Liberation Sans", sans-serif;
  fill: #fff;
}
.qt-text {
  font: bold 12px "Liberation Sans", sans-serif;
  fill: #fff;
}
```
